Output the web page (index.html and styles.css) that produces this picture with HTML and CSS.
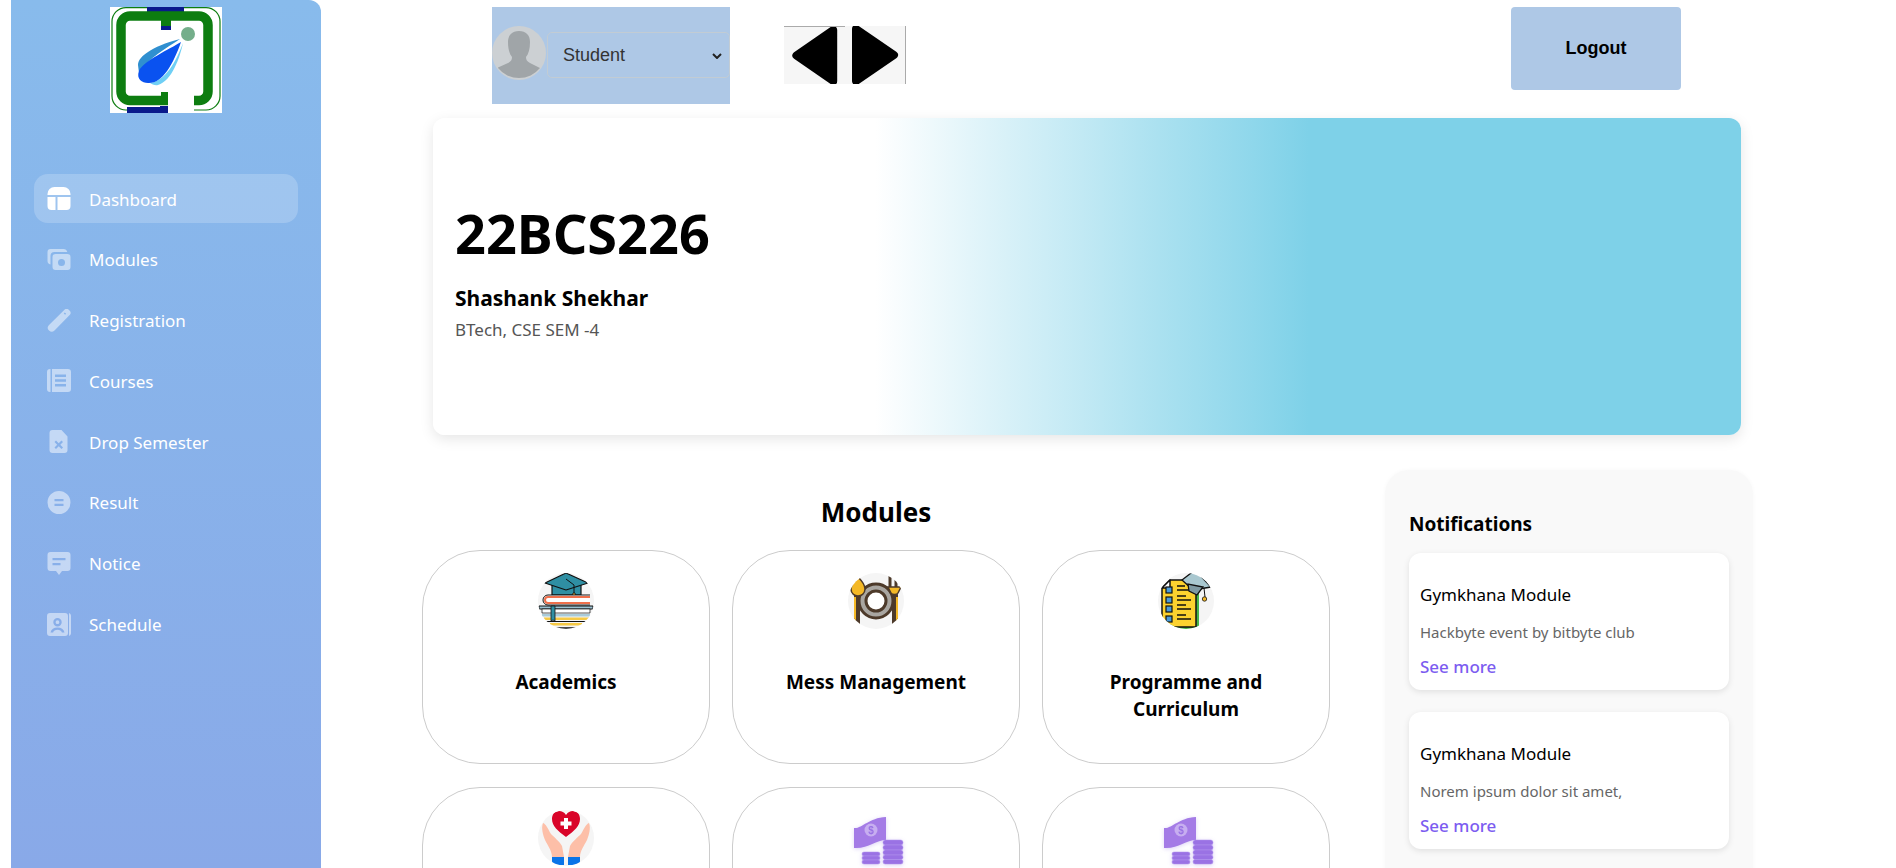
FILE: index.html
```html
<!DOCTYPE html>
<html lang="en">
<head>
<meta charset="utf-8">
<title>Dashboard</title>
<link rel="stylesheet" href="styles.css">
</head>
<body>
<div class="app">
  <aside class="sidebar">
    <svg class="logo" viewBox="0 0 112 106">
      <rect width="112" height="106" fill="#fff"/>
      <rect x="37" y="0" width="37" height="5" fill="#0a1a8c"/>
      <rect x="17" y="100" width="41" height="6" fill="#0a1a8c"/>
      <path d="M37 .6H16A14 14 0 0 0 2 14.600V89a14 14 0 0 0 14 14h1M74 .6h22a14 14 0 0 1 14 14V89a14 14 0 0 1-14 14H84" fill="none" stroke="#0d7d10" stroke-width="1.200"/>
      <path d="M58 93.500H20a9 9 0 0 1-9-9V18a9 9 0 0 1 9-9h69a9 9 0 0 1 9 9v66.500a9 9 0 0 1-9 9h-5" fill="none" stroke="#0d7d10" stroke-width="9.500"/>
      <rect x="51" y="9" width="10" height="11" fill="#0d7d10"/>
      <rect x="51" y="19" width="10" height="4" fill="#0a1a8c"/>
      <path d="M51 85h7v5h-7z" fill="#0d7d10"/>
      <path d="M50 99h8v4h-8z" fill="#0a1a8c"/>
      <circle cx="78" cy="27" r="7" fill="#74ae8a"/>
      <path d="M73 36C70 50 62 74 48 78C45 79 42 77 40 76C55 74 66 55 73 36Z" fill="#6fcff5"/>
      <path d="M70 32C55 36 45 40 38 45C32 49 28 53 28 58L29 66C40 50 55 42 70 32Z" fill="#2f8fd0"/>
      <path d="M71 35C60 42 33 54 29 64C26 72 32 76 38 76C52 77 63 58 71 35Z" fill="#0a52f0"/>
    </svg>
    <nav class="nav">
      <a class="nav-item active" href="#">
        <svg class="nav-icon" viewBox="0 0 23 23"><path d="M7 0h9a7 7 0 0 1 7 7v1H0V7a7 7 0 0 1 7-7zM0 10h8v13H4a4 4 0 0 1-4-4zM10 10h13v9a4 4 0 0 1-4 4h-9z"/></svg>
        <span class="nav-label">Dashboard</span>
      </a>
      <a class="nav-item" href="#">
        <svg class="nav-icon" viewBox="0 0 23 23"><path d="M3 1h13a4 4 0 0 1 3.800 3H7a4 4 0 0 0-4 4v8.500A3.500 3.500 0 0 1 0 13V4a3 3 0 0 1 3-3z"/><path fill-rule="evenodd" d="M8 6h12a3 3 0 0 1 3 3v10a3 3 0 0 1-3 3H8a3 3 0 0 1-3-3V9a3 3 0 0 1 3-3zm6 5a3.500 3.500 0 1 0 0 7 3.500 3.500 0 0 0 0-7z"/></svg>
        <span class="nav-label">Modules</span>
      </a>
      <a class="nav-item" href="#">
        <svg class="nav-icon" viewBox="0 0 23 23"><path fill-rule="evenodd" d="M17 .8a3 3 0 0 1 4.200 0l1 1a3 3 0 0 1 0 4.200L7 21.500a4 4 0 0 1-5.500.1 4 4 0 0 1 0-5.600zm.3 2.700-1 1 1.300 1.300 1-1z"/></svg>
        <span class="nav-label">Registration</span>
      </a>
      <a class="nav-item" href="#">
        <svg class="nav-icon" viewBox="0 0 24 23"><path fill-rule="evenodd" d="M3 0h.5v23H3a3 3 0 0 1-3-3V3a3 3 0 0 1 3-3zM5 0h16a3 3 0 0 1 3 3v17a3 3 0 0 1-3 3H5zm3 5.500V8h11V5.500zm0 4.800v2.500h11v-2.500zm0 4.800v2.500h11v-2.500z"/></svg>
        <span class="nav-label">Courses</span>
      </a>
      <a class="nav-item" href="#">
        <svg class="nav-icon" viewBox="0 0 23 23"><path fill-rule="evenodd" d="M5 0h9l6 6.500V20a3 3 0 0 1-3 3H5a3 3 0 0 1-3-3V3a3 3 0 0 1 3-3zm3.500 10.500L7 12l2.700 2.700L7 17.400 8.500 19l2.700-2.700 2.800 2.700 1.500-1.600-2.700-2.700 2.700-2.700-1.500-1.500-2.800 2.700z"/></svg>
        <span class="nav-label">Drop Semester</span>
      </a>
      <a class="nav-item" href="#">
        <svg class="nav-icon" viewBox="0 0 23 23"><path fill-rule="evenodd" d="M11.500 0a11.500 11.500 0 1 1 0 23 11.500 11.500 0 0 1 0-23zM7 8v2.300h9V8zm0 4.700V15h9v-2.300z"/></svg>
        <span class="nav-label">Result</span>
      </a>
      <a class="nav-item" href="#">
        <svg class="nav-icon" viewBox="0 0 23 23"><path fill-rule="evenodd" d="M3 0h17a3 3 0 0 1 3 3v13a3 3 0 0 1-3 3h-5.500l-3 4-3-4H3a3 3 0 0 1-3-3V3a3 3 0 0 1 3-3zm2 6v2.300h13V6zm0 5v2.300h8V11z"/></svg>
        <span class="nav-label">Notice</span>
      </a>
      <a class="nav-item" href="#">
        <svg class="nav-icon" viewBox="0 0 24 23"><path d="M22 0a3 3 0 0 1 2 3v17a3 3 0 0 1-2 3z"/><path fill-rule="evenodd" d="M3 0h15a3 3 0 0 1 3 3v17a3 3 0 0 1-3 3H3a3 3 0 0 1-3-3V3a3 3 0 0 1 3-3zm7.500 5a4.200 4.200 0 1 0 0 8.400 4.200 4.200 0 0 0 0-8.400zm0 2.300a1.900 1.900 0 1 1 0 3.800 1.900 1.900 0 0 1 0-3.800zM3.500 19.500h2.600c.5-1.800 2.200-2.700 4.400-2.700s3.900.9 4.400 2.700h2.600c-.7-3.200-3.400-5-7-5s-6.300 1.800-7 5z"/></svg>
        <span class="nav-label">Schedule</span>
      </a>
    </nav>
  </aside>

  <main class="main">
    <header class="topbar">
      <div class="role-box">
        <svg class="avatar" viewBox="0 0 54 54">
          <circle cx="27" cy="27" r="27" fill="#ccd0d3"/>
          <path d="M6 41.500l10-4.500c3-1.500 4-3 4-6-2.500-3-4-8-4-15 0-7 4-11 11-11s11 4 11 11c0 7-1.500 12-4 15 0 3 1 4.500 4 6l10 5a27 27 0 0 1-42 0z" fill="#a0a5a8"/>
        </svg>
        <div class="role-field">
          <select class="role-select"><option>Student</option></select>
          <svg class="role-chevron" viewBox="0 0 10 6"><path d="M1 1l4 4 4-4" fill="none" stroke="#222" stroke-width="2"/></svg>
        </div>
      </div>
      <div class="arrows">
        <button class="arrow arrow-left" type="button" aria-label="Back">
          <svg viewBox="0 0 61 58"><path d="M12 29 49.600 3v52z" stroke="#000" stroke-width="8" stroke-linejoin="round"/></svg>
        </button>
        <button class="arrow arrow-right" type="button" aria-label="Forward">
          <svg viewBox="0 0 60 58"><path d="M11 3 49 29 11 55z" stroke="#000" stroke-width="8" stroke-linejoin="round"/></svg>
        </button>
      </div>
      <button class="logout" type="button">Logout</button>
    </header>

    <section class="hero">
      <h1 class="hero-id">22BCS226</h1>
      <h2 class="hero-name">Shashank Shekhar</h2>
      <p class="hero-sub">BTech, CSE SEM -4</p>
    </section>

    <div class="lower">
      <section class="modules">
        <h2 class="modules-title">Modules</h2>
        <div class="module-grid">
          <article class="module-card">
            <svg class="module-img" viewBox="0 0 56 56">
              <path d="M14 11v11h29V11z" fill="#2f8fa3" stroke="#111" stroke-width="1.200"/>
              <path d="M28 0 7 10l21 7 22-7z" fill="#2f8fa3" stroke="#111" stroke-width="1.200" stroke-linejoin="round"/>
              <path d="M28 6l8 6v8" fill="none" stroke="#111" stroke-width="1"/>
              <path d="M35 20h2l1.500 7h-5z" fill="#f6c945" stroke="#111" stroke-width=".8"/>
              <path d="M52 22H10a5 5 0 0 0 0 10h42" fill="#fff" stroke="#111" stroke-width="1"/>
              <path d="M52 24H10a3 3 0 0 0 0 6h42" fill="none" stroke="#ef704c" stroke-width="2"/>
              <path d="M55 33H1v3h54z" fill="#9cc0d0" stroke="#111" stroke-width="1"/>
              <path d="M4 36h48v4H4z" fill="#fff" stroke="#111" stroke-width=".7"/>
              <path d="M4 41h48v2.500H4z" fill="#a9cbd9"/>
              <path d="M6 44.500h45V47H6z" fill="#f6c945"/>
              <path d="M8 48.500h40" stroke="#111" stroke-width="1"/>
              <path d="M12 50h32v2.500H12z" fill="#f6c945"/>
              <path d="M14 55h28" stroke="#111" stroke-width="1.500"/>
              <path d="M13 33h4v15l-2-1-2 1z" fill="#2f8fa3" stroke="#111" stroke-width=".8"/>
            </svg>
            <h3 class="module-name">Academics</h3>
          </article>
          <article class="module-card">
            <svg class="module-img" viewBox="0 0 56 56">
              <circle cx="28" cy="28" r="17" fill="#a9a6a1" stroke="#4d3a2a" stroke-width="3"/>
              <circle cx="28" cy="28" r="10" fill="#fff" stroke="#4d3a2a" stroke-width="3"/>
              <path d="M9 22v31" stroke="#4d3a2a" stroke-width="6" stroke-linecap="round"/>
              <path d="M7 24v27" stroke="#f4b826" stroke-width="2"/>
              <path d="M10 4c-4 4-7 8-7 12 0 5 4 7 7 7s7-2 7-7c0-4-3-8-7-12z" fill="#f4b826" stroke="#4d3a2a" stroke-width="1.500"/>
              <path d="M47 22v31" stroke="#4d3a2a" stroke-width="6" stroke-linecap="round"/>
              <path d="M49 24v27" stroke="#f4b826" stroke-width="2"/>
              <path d="M42 2v13M48 2v13" stroke="#4d3a2a" stroke-width="3"/>
              <path d="M40 14h13l-3 6c-1 2-6 2-7 0z" fill="#f4b826" stroke="#4d3a2a" stroke-width="1.500"/>
            </svg>
            <h3 class="module-name">Mess Management</h3>
          </article>
          <article class="module-card">
            <svg class="module-img" viewBox="0 0 56 56">
              <path d="M12 10h26l3 2v44H12z" fill="#45b54a"/>
              <path d="M12 7h24l2 3v44H4V15z" fill="#fcd22f" stroke="#111" stroke-width="1.500" stroke-linejoin="round"/>
              <path d="M12 7v8H4z" fill="#fff" stroke="#111" stroke-width="1.500" stroke-linejoin="round"/>
              <g fill="#4a9bd8" stroke="#111" stroke-width="1.200">
                <rect x="8" y="14" width="6" height="6"/><rect x="8" y="24" width="6" height="6"/><rect x="8" y="33" width="6" height="6"/><rect x="8" y="43" width="6" height="6"/>
              </g>
              <path d="M19 13h8M19 17h13M19 23h9M19 27h14M19 32h9M19 36h14M19 42h9M19 46h14" stroke="#111" stroke-width="1.500"/>
              <path d="M24 7 37 -3 53 14 35 17z" fill="#a9c8d0" stroke="#111" stroke-width="1.300" stroke-linejoin="round"/>
              <path d="M30 11l1 7 8 4 6-8z" fill="#7f9aa3" stroke="#111" stroke-width="1.300"/>
              <path d="M46 15l1 9" stroke="#111" stroke-width="1"/>
              <circle cx="46.500" cy="26" r="2.200" fill="#f4b826" stroke="#111" stroke-width=".8"/>
            </svg>
            <h3 class="module-name">Programme and Curriculum</h3>
          </article>
          <article class="module-card">
            <svg class="module-img" viewBox="0 0 56 56">
              <path d="M5 13c3 1 5 6 8 11 3 3 9 8 11 12l2 11H14c0-6-4-11-7-17-2-5-4-12-2-17z" fill="#fdbfa8"/>
              <path d="M51 13c-3 1-5 6-8 11-3 3-9 8-11 12l-2 11h12c0-6 4-11 7-17 2-5 4-12 2-17z" fill="#fdbfa8"/>
              <path d="M14 47h12v8h-8c-3 0-4-2-4-4zM30 47h12v4c0 2-1 4-4 4h-8z" fill="#0a74e8"/>
              <path d="M28 27C20 21 14 16 14 9c0-5 3-8 7-8 3 0 5 1 7 4 2-3 4-4 7-4 4 0 7 3 7 8 0 7-6 12-14 18z" fill="#d90429"/>
              <path d="M26 8h4v3.500h3.500v4H30V19h-4v-3.500h-3.500v-4H26z" fill="#fff"/>
            </svg>
            <h3 class="module-name"></h3>
          </article>
          <article class="module-card">
            <svg class="module-img module-img-plain" viewBox="0 0 56 56">
              <path d="M6 18C14 19 20 8 38 7V30C28 30 20 39 6 38Z" fill="#a47be6"/>
              <circle cx="23" cy="20" r="6.500" fill="#c7aef0"/>
              <text class="money-sign" x="23" y="24" text-anchor="middle">$</text>
              <g fill="#9a72e4" stroke="#b397ee" stroke-width=".5"><rect x="35" y="30" width="20" height="5" rx="2.500"/><rect x="35" y="35" width="20" height="5" rx="2.500"/><rect x="35" y="40" width="20" height="5" rx="2.500"/><rect x="35" y="45" width="20" height="4.500" rx="2.200"/><rect x="35" y="49.500" width="20" height="4.500" rx="2.200"/><rect x="14" y="42" width="18" height="4" rx="2"/><rect x="14" y="46" width="18" height="4" rx="2"/><rect x="14" y="50" width="18" height="4" rx="2"/></g>
            </svg>
            <h3 class="module-name"></h3>
          </article>
          <article class="module-card">
            <svg class="module-img module-img-plain" viewBox="0 0 56 56">
              <path d="M6 18C14 19 20 8 38 7V30C28 30 20 39 6 38Z" fill="#a47be6"/>
              <circle cx="23" cy="20" r="6.500" fill="#c7aef0"/>
              <text class="money-sign" x="23" y="24" text-anchor="middle">$</text>
              <g fill="#9a72e4" stroke="#b397ee" stroke-width=".5"><rect x="35" y="30" width="20" height="5" rx="2.500"/><rect x="35" y="35" width="20" height="5" rx="2.500"/><rect x="35" y="40" width="20" height="5" rx="2.500"/><rect x="35" y="45" width="20" height="4.500" rx="2.200"/><rect x="35" y="49.500" width="20" height="4.500" rx="2.200"/><rect x="14" y="42" width="18" height="4" rx="2"/><rect x="14" y="46" width="18" height="4" rx="2"/><rect x="14" y="50" width="18" height="4" rx="2"/></g>
            </svg>
            <h3 class="module-name"></h3>
          </article>
        </div>
      </section>

      <aside class="notifications">
        <h2 class="notifications-title">Notifications</h2>
        <article class="notice-card">
          <h3 class="notice-title">Gymkhana Module</h3>
          <p class="notice-text">Hackbyte event by bitbyte club</p>
          <a class="notice-link" href="#">See more</a>
        </article>
        <article class="notice-card">
          <h3 class="notice-title">Gymkhana Module</h3>
          <p class="notice-text">Norem ipsum dolor sit amet,</p>
          <a class="notice-link" href="#">See more</a>
        </article>
      </aside>
    </div>
  </main>
</div>
</body>
</html>
```

FILE: styles.css
```css
* { box-sizing: border-box; }
html, body { margin: 0; height: 868px; overflow: hidden; background: #fff; }
body { font-family: "Noto Sans", "Open Sans", sans-serif; color: #000; }

.app { display: flex; height: 868px; overflow: hidden; }

.sidebar {
  flex: none;
  width: 310px;
  margin-left: 11px;
  height: 868px;
  padding-top: 7px;
  border-radius: 0 12px 0 0;
  background: linear-gradient(180deg, #88bbec 0%, #89a9e8 100%);
  display: flex;
  flex-direction: column;
}
.logo { display: block; width: 112px; height: 106px; margin-left: 99px; flex: none; }
.nav { margin: 61px 23px 0; display: flex; flex-direction: column; gap: 11.800px; }
.nav-item {
  display: flex;
  align-items: center;
  gap: 18px;
  height: 49px;
  padding-left: 13px;
  border-radius: 14px;
  color: #fff;
  font-size: 17px;
  text-decoration: none;
}
.nav-item.active { background: rgba(255, 255, 255, .2); }
.nav-label { margin-top: 1px; }
.nav-icon { width: 24px; height: 23px; fill: rgba(255, 255, 255, .5); flex: none; }
.nav-item.active .nav-icon { fill: #fff; }

.main { flex: none; width: 1575px; }

.topbar { display: flex; align-items: flex-start; padding: 7px 0 0 171px; height: 104px; }
.role-box {
  width: 238px;
  height: 97px;
  background: #aec8e6;
  display: flex;
  align-items: flex-start;
  padding-top: 19px;
}
.avatar { width: 54px; height: 54px; flex: none; }
.role-field { position: relative; width: 184px; height: 46px; margin: 6px 0 0 1px; }
.role-select {
  display: block;
  width: 100%;
  height: 100%;
  padding-left: 15px;
  font: 18px "Liberation Sans", Arial, sans-serif;
  color: #333;
  background: transparent;
  border: 1px solid #c2ccd4;
  border-radius: 5px;
  appearance: none;
}
.role-chevron { position: absolute; right: 8px; top: 21px; width: 10px; height: 6px; }
.arrows { display: flex; width: 122px; height: 58px; margin: 19px 0 0 54px; background: #f6f6f6; }
.arrow { width: 61px; height: 58px; padding: 0; border: 0; background: transparent; overflow: hidden; }
.arrow svg { display: block; width: 100%; height: 100%; }
.arrow-left { border-top: 1px solid #aaa; }
.arrow-right { border-right: 1px solid #aaa; }
.logout {
  width: 170px;
  height: 83px;
  margin-left: 605px;
  border: 0;
  border-radius: 4px;
  background: #aec8e6;
  color: #000;
  font: bold 18px "Liberation Sans", Arial, sans-serif;
}

.hero {
  width: 1308px;
  height: 317px;
  margin: 14px 0 0 112px;
  padding: 80px 22px 0;
  border-radius: 12px;
  background: linear-gradient(90deg, #fff 0%, #fff 33.800%, #7ed1e8 67%, #7ed1e8 100%);
  box-shadow: 0 4px 14px rgba(0, 0, 0, .1);
}
.hero-id { margin: 0; font-size: 54px; line-height: 70px; font-weight: 700; }
.hero-name { margin: 15px 0 0; font-size: 21px; line-height: 30px; font-weight: 700; }
.hero-sub { margin: 6px 0 0; font-size: 17px; line-height: 22px; color: #555; }

.lower { display: flex; align-items: flex-start; margin: 34px 0 0 101px; }
.modules { width: 908px; flex: none; }
.modules-title { margin: 23px 0 0; height: 58px; text-align: center; font-size: 26px; line-height: 40px; font-weight: 700; }
.module-grid { display: grid; grid-template-columns: repeat(3, 288px); column-gap: 22px; row-gap: 23px; }
.module-card {
  height: 214px;
  padding: 22px 20px 0;
  border: 1px solid #ccc;
  border-radius: 58px;
  background: #fff;
  text-align: center;
}
.module-img { display: block; width: 56px; height: 56px; margin: 0 auto; border-radius: 50%; background: #f5f5f5; overflow: hidden; }
.module-img-plain { background: transparent; border-radius: 0; filter: blur(.3px) drop-shadow(0 1px 2px rgba(120, 80, 220, .25)); }
.money-sign { font: bold 10px "Liberation Sans", Arial, sans-serif; fill: #9a72e4; }
.module-name { margin: 40px 0 0; font-size: 19px; line-height: 27px; font-weight: 700; }

.notifications {
  flex: none;
  width: 368px;
  height: 500px;
  margin: 1px 0 0 55px;
  padding: 33px 24px 0;
  border-radius: 24px;
  background: #f9f9f9;
  box-shadow: 0 0 4px rgba(0, 0, 0, .03);
}
.notifications-title { margin: 8px 0 16px; font-size: 19px; line-height: 26px; font-weight: 700; }
.notice-card {
  height: 137px;
  margin-bottom: 22px;
  padding: 30px 11px 0;
  border-radius: 12px;
  background: #fff;
  box-shadow: 0 2px 6px rgba(0, 0, 0, .1);
}
.notice-title { margin: 0; font-size: 17px; line-height: 24px; font-weight: 400; }
.notice-text { margin: 15px 0 0; font-size: 15px; line-height: 21px; color: #666; }
.notice-link { display: block; margin-top: 12px; font-size: 17px; line-height: 24px; font-weight: 500; color: #7c5cf0; text-decoration: none; }
```
